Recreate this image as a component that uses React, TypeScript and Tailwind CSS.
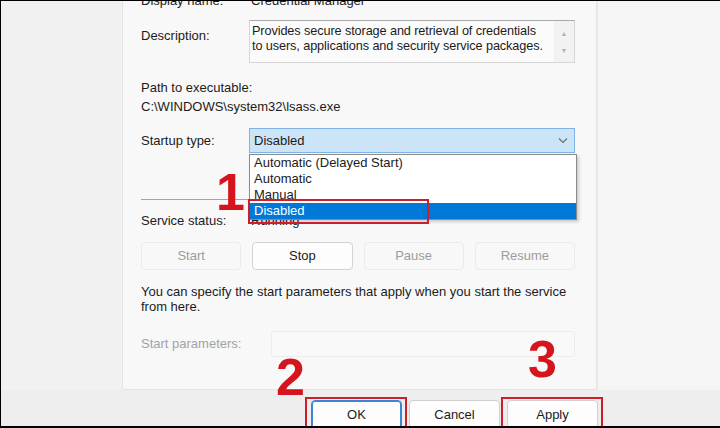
import React from 'react';

const startupOptions = ['Automatic (Delayed Start)', 'Automatic', 'Manual', 'Disabled'];

function ServiceButton({ label, enabled }: { label: string; enabled?: boolean }) {
  return (
    <div
      className={`h-[28px] flex items-center justify-center rounded-[4px] border ${
        enabled ? 'bg-[#fdfdfd] border-[#d3d3d3] text-[#1b1b1b]' : 'bg-[#f8f8f8] border-[#ebebeb] text-[#9d9d9d]'
      }`}
    >
      {label}
    </div>
  );
}

function Marker({ n, className }: { n: string; className: string }) {
  return (
    <div className={`absolute text-[52px] leading-none font-bold text-[#d5141d] ${className}`}>{n}</div>
  );
}

export default function App() {
  return (
    <div
      className="relative w-[720px] h-[428px] overflow-hidden bg-[#f1f1f1] border-t border-l border-b-2 border-black text-[13px] text-[#1b1b1b]"
      style={{ fontFamily: '"Liberation Sans", Arial, sans-serif' }}
    >
      <div className="flex h-[389px]">
        <div className="w-[121px] shrink-0" />

        {/* Tab page */}
        <div className="w-[475px] shrink-0 bg-[#f8f8f8] border-x border-b border-[#e4e4e4] pl-[18px] pr-[21px] flex flex-col">
          <div className="-mt-[8px] h-[16px] leading-[16px] flex">
            <span className="w-[110px]">Display name:</span>
            <span>Credential Manager</span>
          </div>

          <div className="mt-[11px] flex">
            <span className="w-[108px] pt-[8px] leading-[16px]">Description:</span>
            <div className="relative w-[326px] h-[43px] bg-[#fbfbfb] border border-[#d6d6d6] border-t-[#a9a9a9] pl-[2px] pt-[3px] leading-[15px] text-[12.7px] tracking-[-0.1px]">
              Provides secure storage and retrieval of credentials
              <br />
              to users, applications and security service packages.
              <div className="absolute right-0 top-0 bottom-0 w-[20px] bg-[#f2f2f2] flex flex-col items-center justify-center gap-[10px] text-[7px] leading-none text-[#b4b4b4]">
                <span>▲</span>
                <span>▼</span>
              </div>
            </div>
          </div>

          <div className="mt-[15px] leading-[19px]">
            <div>Path to executable:</div>
            <div>C:\WINDOWS\system32\lsass.exe</div>
          </div>

          <div className="mt-[12px] flex items-center">
            <span className="w-[108px]">Startup type:</span>
            <div className="relative w-[326px] h-[25px] bg-[#cce4f7] border border-[#7fb2e5] pl-[4px] flex items-center">
              Disabled
              <svg className="absolute right-[6px] top-[8px]" width="10" height="7" viewBox="0 0 10 7">
                <path d="M1 1.5 L5 5.5 L9 1.5" fill="none" stroke="#6b6b6b" strokeWidth="1.1" />
              </svg>
              {/* open list */}
              <div className="absolute left-[-1px] top-[25px] w-[328px] bg-white border border-[#8a8a8a] shadow-[2px_2px_3px_rgba(0,0,0,0.18)] z-10 leading-[16px]">
                {startupOptions.map((o) => (
                  <div
                    key={o}
                    className={`pl-[4px] h-[16px] ${o === 'Disabled' ? 'bg-[#0078d7] text-white' : ''}`}
                  >
                    {o}
                  </div>
                ))}
              </div>
            </div>
          </div>

          <div className="mt-[46px] h-px bg-[#a3a3a3] w-[434px]" />

          <div className="mt-[13px] flex leading-[16px]">
            <span className="w-[110px]">Service status:</span>
            <span>Running</span>
          </div>

          <div className="mt-[13px] grid grid-cols-4 gap-[11px] w-[434px]">
            <ServiceButton label="Start" />
            <ServiceButton label="Stop" enabled />
            <ServiceButton label="Pause" />
            <ServiceButton label="Resume" />
          </div>

          <p className="mt-[14px] leading-[15px]">
            You can specify the start parameters that apply when you start the service
            <br />
            from here.
          </p>

          <div className="mt-[17px] flex items-center">
            <span className="w-[130px] text-[#a3a3a3]">Start parameters:</span>
            <div className="w-[304px] h-[26px] bg-[#f9f9f9] border border-[#ececec] rounded-[3px]" />
          </div>
        </div>

        <div className="flex-1 bg-[#f5f5f5] border-l border-[#ebebeb]" />
      </div>

      {/* Dialog footer */}
      <div className="h-[36px] bg-[#eeeeee] pt-[10px] pl-[310px] flex gap-[7px]">
        <div className="w-[91px] h-[30px] bg-[#fdfdfd] border border-[#3b86d4] shadow-[inset_0_0_0_1px_#3b86d4] rounded-[4px] flex items-center justify-center">
          OK
        </div>
        <div className="w-[91px] h-[30px] bg-[#fdfdfd] border border-[#d0d0d0] rounded-[4px] flex items-center justify-center">
          Cancel
        </div>
        <div className="w-[91px] h-[30px] bg-[#fdfdfd] border border-[#d0d0d0] rounded-[4px] flex items-center justify-center">
          Apply
        </div>
      </div>

      {/* annotations */}
      <div className="absolute left-[247px] top-[198px] w-[181px] h-[25px] border-2 border-[#cc1f2b] z-20" />
      <div className="absolute left-[304px] top-[396px] w-[102px] h-[40px] border-2 border-[#cc1f2b]" />
      <div className="absolute left-[500px] top-[396px] w-[102px] h-[40px] border-2 border-[#cc1f2b]" />
      <Marker n="1" className="left-[215px] top-[165px]" />
      <Marker n="2" className="left-[275px] top-[350px]" />
      <Marker n="3" className="left-[527px] top-[332px]" />
    </div>
  );
}
